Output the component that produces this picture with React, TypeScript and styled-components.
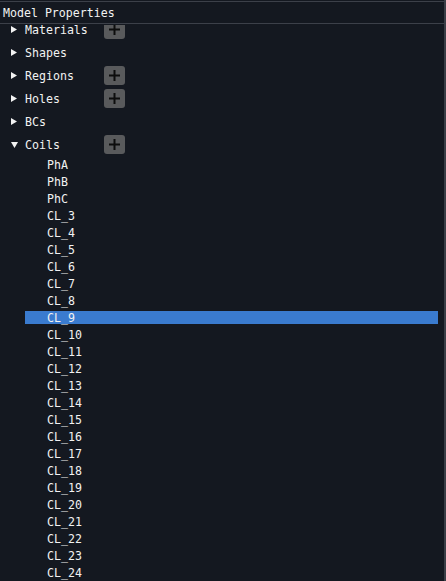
import React from 'react';
import styled, { createGlobalStyle } from 'styled-components';

const GlobalStyle = createGlobalStyle`
  html, body {
    margin: 0;
    padding: 0;
    background: #141820;
  }
`;

const Window = styled.div`
  width: 446px;
  height: 581px;
  display: flex;
  background: #141820;
  overflow: hidden;
  font-family: 'DejaVu Sans Mono', 'Liberation Mono', monospace;
  font-size: 11.6px;
  line-height: 14px;
  color: #f2f2f2;
`;

const Main = styled.div`
  width: 444px;
  display: flex;
  flex-direction: column;
`;

const Edge = styled.div`
  width: 2px;
  background: #3a3e46;
`;

const TitleBar = styled.div`
  width: 442px;
  height: 20px;
  margin-top: 1px;
  border-top: 1px solid #3c4049;
  border-bottom: 1px solid #3c4049;
  box-sizing: content-box;
  display: flex;
  align-items: center;
  padding-left: 3px;
  padding-top: 1px;
`;

const Clip = styled.div`
  margin-top: 1px;
  flex: 1;
  overflow: hidden;
`;

const List = styled.div`
  margin-top: -5px;
  display: flex;
  flex-direction: column;
  gap: 4px;
`;

const TreeRow = styled.div`
  height: 19px;
  display: flex;
  align-items: center;
`;

const Arrow = styled.span`
  width: 25px;
  padding-left: 11px;
  box-sizing: border-box;
  display: flex;
  align-items: center;
`;

const Label = styled.span`
  width: 79px;
  padding-top: 1px;
  white-space: pre;
`;

const AddButton = styled.div`
  width: 21px;
  height: 19px;
  border-radius: 3px;
  background: #595a5c;
  display: flex;
  align-items: center;
  justify-content: center;
`;

const ChildRow = styled.div<{ $selected?: boolean }>`
  height: 13px;
  width: 413px;
  margin-left: 25px;
  padding-left: 22px;
  box-sizing: border-box;
  line-height: 15px;
  background: ${p => (p.$selected ? '#3a7bcf' : 'transparent')};
  white-space: pre;
`;

const Closed = () => (
  <svg width="6" height="7" viewBox="0 0 6 7">
    <polygon points="0,0 6,3.5 0,7" fill="#f2f2f2" />
  </svg>
);

const Open = () => (
  <svg width="7" height="6" viewBox="0 0 7 6">
    <polygon points="0,0 7,0 3.5,6" fill="#f2f2f2" />
  </svg>
);

const Plus = () => (
  <svg width="11" height="11" viewBox="0 0 11 11">
    <rect x="4.5" y="0" width="2" height="11" fill="#0d0d0d" />
    <rect x="0" y="4.5" width="11" height="2" fill="#0d0d0d" />
  </svg>
);

const sections = [
  { name: 'Materials', add: true },
  { name: 'Shapes', add: false },
  { name: 'Regions', add: true },
  { name: 'Holes', add: true },
  { name: 'BCs', add: false },
];

const coils = ['PhA', 'PhB', 'PhC'];
for (let i = 3; i <= 24; i++) coils.push(`CL_${i}`);

export default function App() {
  return (
    <>
      <GlobalStyle />
      <Window>
        <Main>
          <TitleBar>Model Properties</TitleBar>
          <Clip>
            <List>
              {sections.map(s => (
                <TreeRow key={s.name}>
                  <Arrow><Closed /></Arrow>
                  <Label>{s.name}</Label>
                  {s.add && <AddButton><Plus /></AddButton>}
                </TreeRow>
              ))}
              <TreeRow>
                <Arrow><Open /></Arrow>
                <Label>Coils</Label>
                <AddButton><Plus /></AddButton>
              </TreeRow>
              {coils.map(c => (
                <ChildRow key={c} $selected={c === 'CL_9'}>{c}</ChildRow>
              ))}
            </List>
          </Clip>
        </Main>
        <Edge />
      </Window>
    </>
  );
}
